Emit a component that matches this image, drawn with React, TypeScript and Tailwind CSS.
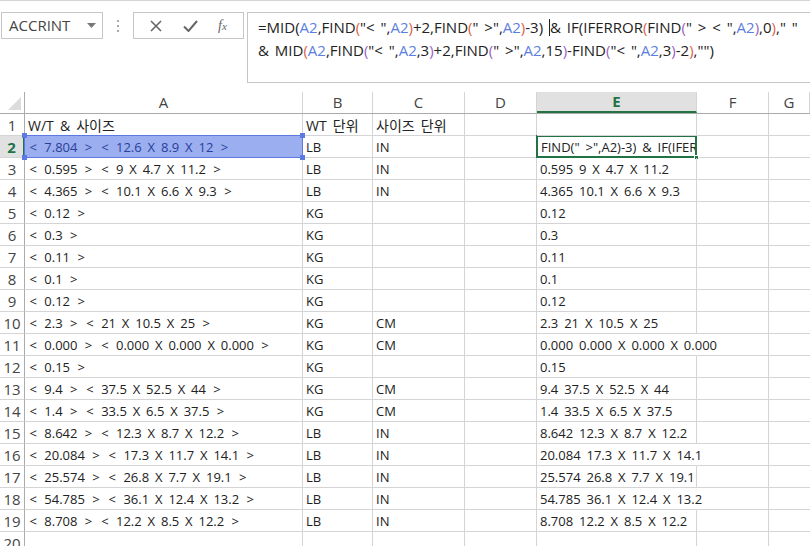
const FONT = { fontFamily: '"Open Sans", "Noto Sans CJK KR", sans-serif' };

type Row = [string, string, string, string];

const rows: Row[] = [
  ["W/T & 사이즈", "WT 단위", "사이즈 단위", ""],
  ["< 7.804 > < 12.6 X 8.9 X 12 >", "LB", "IN", ""],
  ["< 0.595 > < 9 X 4.7 X 11.2 >", "LB", "IN", "0.595 9 X 4.7 X 11.2"],
  ["< 4.365 > < 10.1 X 6.6 X 9.3 >", "LB", "IN", "4.365 10.1 X 6.6 X 9.3"],
  ["< 0.12 >", "KG", "", "0.12"],
  ["< 0.3 >", "KG", "", "0.3"],
  ["< 0.11 >", "KG", "", "0.11"],
  ["< 0.1 >", "KG", "", "0.1"],
  ["< 0.12 >", "KG", "", "0.12"],
  ["< 2.3 > < 21 X 10.5 X 25 >", "KG", "CM", "2.3 21 X 10.5 X 25"],
  ["< 0.000 > < 0.000 X 0.000 X 0.000 >", "KG", "CM", "0.000 0.000 X 0.000 X 0.000"],
  ["< 0.15 >", "KG", "", "0.15"],
  ["< 9.4 > < 37.5 X 52.5 X 44 >", "KG", "CM", "9.4 37.5 X 52.5 X 44"],
  ["< 1.4 > < 33.5 X 6.5 X 37.5 >", "KG", "CM", "1.4 33.5 X 6.5 X 37.5"],
  ["< 8.642 > < 12.3 X 8.7 X 12.2 >", "LB", "IN", "8.642 12.3 X 8.7 X 12.2"],
  ["< 20.084 > < 17.3 X 11.7 X 14.1 >", "LB", "IN", "20.084 17.3 X 11.7 X 14.1"],
  ["< 25.574 > < 26.8 X 7.7 X 19.1 >", "LB", "IN", "25.574 26.8 X 7.7 X 19.1"],
  ["< 54.785 > < 36.1 X 12.4 X 13.2 >", "LB", "IN", "54.785 36.1 X 12.4 X 13.2"],
  ["< 8.708 > < 12.2 X 8.5 X 12.2 >", "LB", "IN", "8.708 12.2 X 8.5 X 12.2"],
  ["", "", "", ""],
];

// rows whose E text spills over into F
const spill = new Set([11, 16, 18]);

// angle brackets sit a little looser in the sheet font
function fmt(s: string) {
  return (
    <span>
      {s.split(/([<>])/).map((p, i) =>
        p === "<" || p === ">" ? (
          <span key={i} className="mx-[1.5px]">
            {p}
          </span>
        ) : (
          p
        )
      )}
    </span>
  );
}

function R({ c }: { c: string }) {
  return <span className="text-[#5b7fe0]">{c}</span>;
}
function P1({ c }: { c: string }) {
  return <span className="text-[#e0613f]">{c}</span>;
}
function P2({ c }: { c: string }) {
  return <span className="text-[#9a5fc4]">{c}</span>;
}

function FormulaBar() {
  return (
    <div className="flex h-[92px] border-t border-[#d4d4d4] pt-[11px]">
      {/* name box */}
      <div className="ml-[1px] flex h-[27px] w-[102px] items-center justify-between border border-[#c6c6c6] pl-[7px] pr-[6px] text-[15px] text-[#444]">
        <span>ACCRINT</span>
        <svg width="9" height="5" viewBox="0 0 9 5">
          <path d="M0 0h9L4.5 5z" fill="#777" />
        </svg>
      </div>
      <div className="flex h-[27px] w-[30px] flex-col items-center justify-center gap-[3px]">
        <span className="h-[2px] w-[2px] bg-[#aaa]" />
        <span className="h-[2px] w-[2px] bg-[#aaa]" />
        <span className="h-[2px] w-[2px] bg-[#aaa]" />
      </div>
      {/* cancel / enter / fx */}
      <div className="flex h-[27px] w-[111px] items-center justify-around border border-[#c6c6c6] px-[6px]">
        <svg width="12" height="12" viewBox="0 0 12 12">
          <path d="M1 1l10 10M11 1L1 11" stroke="#666" strokeWidth="1.6" />
        </svg>
        <svg width="15" height="12" viewBox="0 0 15 12">
          <path d="M1 6.5l4.5 4.5L14 1" stroke="#666" strokeWidth="2" fill="none" />
        </svg>
        <span className="text-[14px] italic text-[#666]" style={{ fontFamily: '"Liberation Serif", serif' }}>
          f<span className="text-[11px]">x</span>
        </span>
      </div>
      {/* formula */}
      <div className="ml-[3px] h-[71px] flex-1 border border-r-0 border-[#c6c6c6] pl-[10px] pt-[3px] text-[15px] leading-[23px] text-[#222] [word-spacing:2px]">
        <div className="whitespace-pre">
          =MID(<R c="A2" />,FIND<P1 c="(" />"&lt; ",<R c="A2" /><P1 c=")" />+2,FIND<P1 c="(" />" &gt;",<R c="A2" />
          <P1 c=")" />-3) <span className="inline-block h-[17px] w-[1px] translate-y-[3px] bg-[#222]" />& IF(IFERROR
          <P1 c="(" />FIND<P2 c="(" />" &gt; &lt; ",<R c="A2" />
          <P2 c=")" />,0<P1 c=")" />," "
        </div>
        <div className="whitespace-pre">
          &amp; MID<P1 c="(" />
          <R c="A2" />,FIND<P2 c="(" />"&lt; ",<R c="A2" />,3<P2 c=")" />+2,FIND<P2 c="(" />" &gt;",<R c="A2" />,15
          <P2 c=")" />-FIND<P2 c="(" />"&lt; ",<R c="A2" />,3<P2 c=")" />-2<P1 c=")" />,"")
        </div>
      </div>
    </div>
  );
}

const colW = ["w-[278px]", "w-[70px]", "w-[92px]", "w-[72px]", "w-[160px]", "w-[72px]", "flex-1"];
const letters = ["A", "B", "C", "D", "E", "F", "G"];

function HeaderRow() {
  return (
    <div className="flex h-[22px] border-b border-[#ababab] text-[15px] text-[#444]">
      <div className="relative w-[25px] shrink-0 border-r border-[#ababab]">
        <svg className="absolute bottom-[3px] right-[3px]" width="13" height="13" viewBox="0 0 13 13">
          <path d="M13 0V13H0z" fill="#dcdcdc" />
        </svg>
      </div>
      {letters.map((l, i) =>
        l === "E" ? (
          <div
            key={l}
            className={`${colW[i]} flex shrink-0 items-center justify-center border-b-2 border-r border-b-[#217346] border-r-[#d4d4d4] bg-[#e1e1e1] font-bold text-[#217346]`}
          >
            {l}
          </div>
        ) : (
          <div key={l} className={`${colW[i]} flex shrink-0 items-center justify-center border-r border-[#d4d4d4]`}>
            {l}
          </div>
        )
      )}
    </div>
  );
}

function DataRow({ row, n }: { row: Row; n: number }) {
  const active = n === 2;
  const cell = "flex shrink-0 items-center border-b border-r border-[#d4d4d4] pl-[3px] pt-[2px] whitespace-nowrap";
  return (
    <div className="flex h-[22px] text-[13px] text-[#222] [word-spacing:2.5px]">
      <div
        className={
          active
            ? "flex w-[25px] shrink-0 items-center justify-center border-b border-r-2 border-b-[#d4d4d4] border-r-[#217346] bg-[#e1e1e1] pt-[2px] text-[15px] font-bold text-[#217346]"
            : "flex w-[25px] shrink-0 items-center justify-center border-b border-r border-b-[#d4d4d4] border-r-[#ababab] pt-[2px] text-[15px] text-[#444]"
        }
      >
        {n}
      </div>
      {active ? (
        <div className={`${colW[0]} relative flex shrink-0 items-center border-b border-r border-[#d4d4d4] pl-[3px] pt-[2px]`}>
          <div className="absolute inset-[-1px] border-[1.5px] border-[#5b79e0] bg-[#9aaef0]" />
          <span className="relative text-[#2a3f9a]">{fmt(row[0])}</span>
          <span className="absolute left-[-3px] top-[-3px] h-[5px] w-[5px] bg-[#5b79e0]" />
          <span className="absolute right-[-3px] top-[-3px] h-[5px] w-[5px] bg-[#5b79e0]" />
          <span className="absolute bottom-[-3px] left-[-3px] h-[5px] w-[5px] bg-[#5b79e0]" />
          <span className="absolute bottom-[-3px] right-[-3px] h-[5px] w-[5px] bg-[#5b79e0]" />
        </div>
      ) : (
        <div className={`${colW[0]} ${cell} ${n === 1 ? "text-[14px]" : ""}`}>{fmt(row[0])}</div>
      )}
      <div className={`${colW[1]} ${cell} ${n === 1 ? "text-[14px]" : ""}`}>{row[1]}</div>
      <div className={`${colW[2]} ${cell} ${n === 1 ? "text-[14px]" : ""}`}>{row[2]}</div>
      <div className={`${colW[3]} ${cell}`}></div>
      {active ? (
        <div className={`${colW[4]} relative flex shrink-0 items-center border-b border-r border-[#d4d4d4]`}>
          <div className="absolute inset-[-1px] overflow-hidden border-2 border-[#217346] bg-white pl-[3px] pt-[1px] leading-[19px] whitespace-nowrap">
            FIND(" &gt;",A2)-3) &amp; IF(IFERROR
          </div>
          <span className="absolute bottom-[-3px] right-[-3px] h-[5px] w-[5px] border border-white bg-[#217346]" />
        </div>
      ) : (
        <div className={`${colW[4]} ${cell} ${spill.has(n) ? "border-r-transparent" : ""} relative z-10`}>{row[3]}</div>
      )}
      <div className={`${colW[5]} ${cell}`}></div>
      <div className={`${colW[6]} flex items-center border-b border-[#d4d4d4]`}></div>
    </div>
  );
}

export default function App() {
  return (
    <div className="h-[546px] w-[810px] overflow-hidden bg-white" style={FONT}>
      <FormulaBar />
      <HeaderRow />
      {rows.map((r, i) => (
        <DataRow key={i} row={r} n={i + 1} />
      ))}
    </div>
  );
}
